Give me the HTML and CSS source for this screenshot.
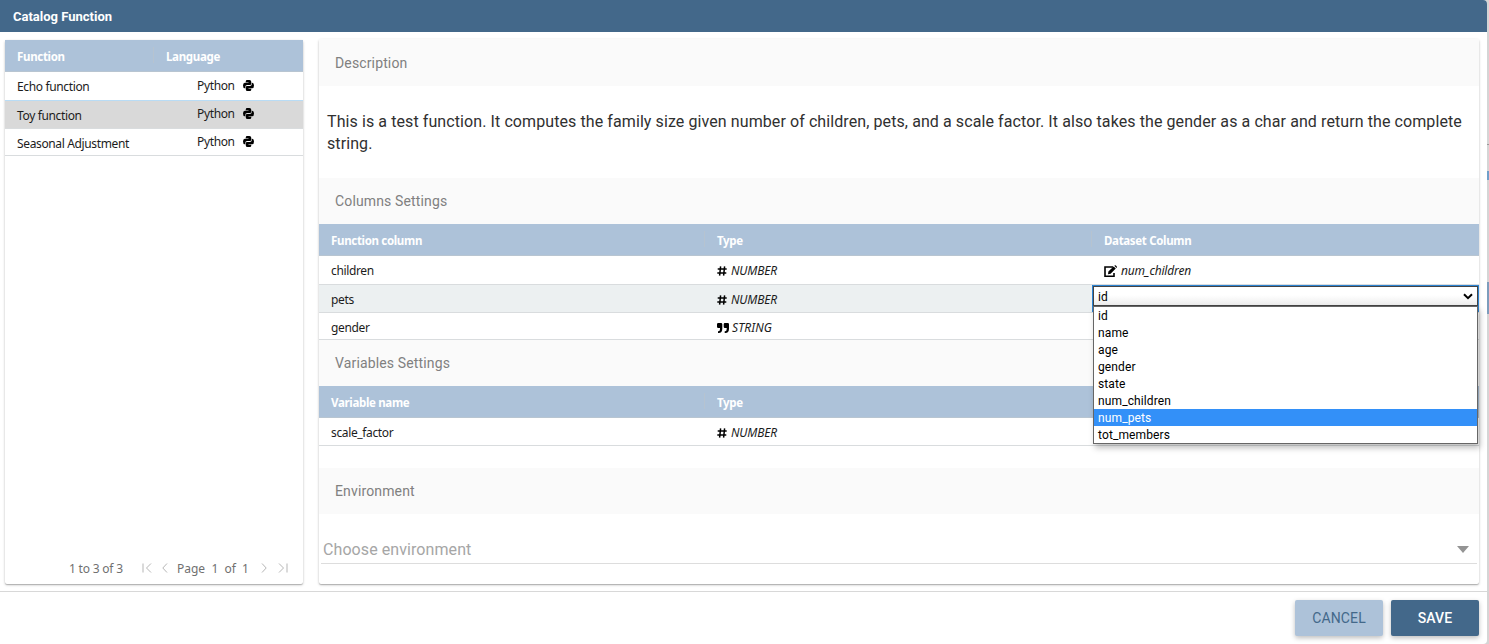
FILE: index.html
```html
<!DOCTYPE html>
<html lang="en">
<head>
<meta charset="utf-8">
<title>Catalog Function</title>
<link rel="stylesheet" href="styles.css">
</head>
<body>
<svg class="defs" aria-hidden="true">
  <symbol id="python" viewBox="0 0 24 24"><path d="M9 0h5q4 0 4 4v4q0 3-3 3H9q-4 0-4 4v3H4q-4 0-4-6t4-6h8V5H6V3q0-3 3-3z"/><path d="M15 24h-5q-4 0-4-4v-4q0-3 3-3h6q4 0 4-4V6h1q4 0 4 6t-4 6h-8v1h6v2q0 3-3 3z"/></symbol>
  <symbol id="hash" viewBox="0 0 10 10"><path d="M3.6.4 2.6 9.6M7.6.4 6.6 9.6M.7 3.1h9M.3 6.9h9" fill="none" stroke="currentColor" stroke-width="1.5"/></symbol>
  <symbol id="quote" viewBox="0 0 12 10"><path d="M1.200 0h2.800Q5.300 0 5.300 1.200v4.600Q5.300 10 1.600 10H1V8.200h.5Q3 8.200 3 6V5H1.200Q0 5 0 3.800V1.200Q0 0 1.200 0zM7.900 0h2.900Q12 0 12 1.200v4.600Q12 10 8.300 10H7.700V8.200h.5Q9.700 8.200 9.700 6V5H7.900Q6.700 5 6.700 3.800V1.200Q6.700 0 7.900 0z"/></symbol>
  <symbol id="edit" viewBox="0 0 14 12"><path d="M9 2H1v9.200h9V8" fill="none" stroke="currentColor" stroke-width="1.600"/><path d="M4 9.200l.4-2.600L9.600 1.400l2.200 2.200-5.200 5.200zM10.300.7q.8-.9 1.600-.1l.7.7q.8.8-.1 1.600z"/></symbol>
</svg>
<div class="backdrop">
<div class="dialog">
  <header class="titlebar">Catalog Function</header>
  <main class="content">
    <section class="card functions">
      <div class="grid-head"><span>Function</span><span class="sep">Language</span></div>
      <div class="grid-row"><span>Echo function</span><span class="lang">Python<svg class="py"><use href="#python"/></svg></span></div>
      <div class="grid-row selected"><span>Toy function</span><span class="lang">Python<svg class="py"><use href="#python"/></svg></span></div>
      <div class="grid-row last"><span>Seasonal Adjustment</span><span class="lang">Python<svg class="py"><use href="#python"/></svg></span></div>
      <div class="pager">
        <span class="summary">1 to 3 of 3</span>
        <svg class="first" viewBox="0 0 10 10"><path d="M1 .5v9M9 .5 4.500 5 9 9.500"/></svg>
        <svg class="prev" viewBox="0 0 6 10"><path d="M5 .5.800 5 5 9.500"/></svg>
        <span class="page">Page&nbsp; 1&nbsp; of&nbsp; 1</span>
        <svg class="next" viewBox="0 0 6 10"><path d="M1 .5 5.200 5 1 9.500"/></svg>
        <svg class="end" viewBox="0 0 10 10"><path d="M9 .5v9M1 .5 5.500 5 1 9.500"/></svg>
      </div>
    </section>
    <section class="card settings">
      <h2 class="toolbar top">Description</h2>
      <p class="description">This is a test function. It computes the family size given number of children, pets, and a scale factor. It also takes the gender as a char and return the complete string.</p>
      <h2 class="toolbar">Columns Settings</h2>
      <div class="grid-head three"><span>Function column</span><span class="sep">Type</span><span class="sep">Dataset Column</span></div>
      <div class="grid-row three"><span>children</span><span class="type"><svg class="hash"><use href="#hash"/></svg><i>NUMBER</i></span><span class="type"><svg class="edit"><use href="#edit"/></svg><i class="dataset">num_children</i></span></div>
      <div class="grid-row three hovered"><span>pets</span><span class="type"><svg class="hash"><use href="#hash"/></svg><i>NUMBER</i></span>
        <div class="editor">
          <div class="select"><span>id</span><svg class="chevron" viewBox="0 0 10 7"><path d="M1 1.200 5 5.200 9 1.200"/></svg></div>
          <ul class="options"><li>id</li><li>name</li><li>age</li><li>gender</li><li>state</li><li>num_children</li><li class="active">num_pets</li><li>tot_members</li></ul>
        </div>
      </div>
      <div class="grid-row three last"><span>gender</span><span class="type"><svg class="quote"><use href="#quote"/></svg><i class="string">STRING</i></span><span></span></div>
      <h2 class="toolbar">Variables Settings</h2>
      <div class="grid-head three"><span>Variable name</span><span class="sep">Type</span><span></span></div>
      <div class="grid-row three only"><span>scale_factor</span><span class="type"><svg class="hash"><use href="#hash"/></svg><i>NUMBER</i></span><span></span></div>
      <h2 class="toolbar env">Environment</h2>
      <div class="env-select"><span>Choose environment</span><b class="caret"></b></div>
    </section>
  </main>
  <footer class="actions"><button class="btn cancel">CANCEL</button><button class="btn save">SAVE</button></footer>
</div>
<div class="behind"></div>
</div>
</body>
</html>
```
FILE: styles.css
```css
* { box-sizing: border-box; }
body { margin: 0; font-family: Roboto, sans-serif; overflow: hidden; }
.defs { position: absolute; width: 0; height: 0; }
.backdrop { display: flex; height: 644px; background: #d5d5d5; }
.behind { width: 2px; background: linear-gradient(#d5d5d5 144px, #999 144px 145px, #d5d5d5 145px 171px, #6f9fc9 171px 180px, #d5d5d5 180px 282px, #7d9dbc 282px 314px, #d5d5d5 314px); }
.dialog { display: flex; flex-direction: column; width: 1487px; height: 644px; background: #fff; border-radius: 0 4px 4px 0; overflow: hidden; }
.titlebar { height: 32px; padding-left: 13px; background: #43688a; color: #fff; font-size: 13px; font-weight: 700; line-height: 33px; letter-spacing: 0; }
.content { display: flex; gap: 16px; height: 560px; padding: 8px 8px 8px 5px; border-bottom: 1px solid #d8d8d8; }
.card { display: flex; flex-direction: column; background: #fff; border-radius: 2px; box-shadow: 0 1px 3px rgba(0,0,0,.2), 0 1px 1px rgba(0,0,0,.2); }
.functions { width: 298px; height: 544px; }
.settings { width: 1160px; height: 545px; margin-top: -1px; }

.grid-head, .grid-row { display: grid; grid-template-columns: 149px 149px; flex: none; font-family: "Noto Sans", sans-serif; font-size: 12px; }
.grid-head { height: 32px; align-items: center; background: #adc2d9; border-bottom: 1px solid #b8c5d1; color: #fff; font-weight: 700; font-size: 11.500px; letter-spacing: -.33px; }
.grid-head > span, .grid-row > span { padding-left: 12px; }
.grid-head > span { line-height: 16px; padding-top: 2px; }
.sep { position: relative; }
.sep::before { content: ""; position: absolute; left: -1px; top: 0; height: 16px; border-left: 1px solid #b6c3d0; }
.three { grid-template-columns: 386px 387px 387px; }
.grid-row { height: 28px; line-height: 28px; border-bottom: 1px solid #d9dcde; color: #1c1c1c; letter-spacing: -.36px; }
.grid-row > span { padding-top: 1px; }
.functions .grid-row { height: 29px; border-color: #b9dcf5; }
.functions .selected { height: 28px; background: #d9d9d9; border-color: #d9dcde; }
.functions .last { height: 27px; border-color: #d9dcde; }
.grid-row .lang { display: flex; padding: 0 0 0 43px; height: 27px; line-height: 27px; align-items: center; }
.functions .selected .lang, .functions .last .lang { line-height: 25px; height: 25px; }
.py { width: 11px; height: 11px; margin-left: 8px; fill: #000; }
.three.grid-row { height: 29px; }
.three.grid-row.hovered { height: 28px; background: #ecf0f1; }
.three.grid-row.last { height: 27px; }
.three.grid-row.only { height: 28px; }
.type { display: flex; align-items: center; height: 28px; }
.type svg { color: #000; fill: #000; }
.type i { font-weight: 400; letter-spacing: -.15px; }
.type i.string { letter-spacing: .1px; }
.hash { width: 10px; height: 10px; margin-right: 4px; }
.quote { width: 12px; height: 10px; margin-right: 3px; }
.edit { width: 14px; height: 12px; margin-right: 3px; }
.type i.dataset { letter-spacing: -.18px; }

.pager { display: flex; align-items: center; height: 32px; margin-top: auto; padding-left: 64px; color: #707070; font-family: "Noto Sans", sans-serif; font-size: 12px; }
.pager svg { height: 10px; fill: none; stroke: #b5b5b5; stroke-width: 1; }
.summary { width: 73px; letter-spacing: -.2px; }
.pager .first { width: 10px; }
.pager .prev { width: 6px; margin-left: 10px; }
.page { width: 74px; margin-left: 9px; white-space: nowrap; }
.pager .next { width: 6px; margin-left: 10px; }
.pager .end { width: 10px; margin-left: 11px; }

.toolbar { flex: none; height: 46px; margin: 0; padding-left: 16px; background: #fafafa; color: #808080; font-size: 14px; font-weight: 400; line-height: 46px; letter-spacing: .14px; }
.toolbar.top { height: 47px; line-height: 48px; }
.toolbar.env { margin-top: 22px; }
.description { height: 92px; margin: 0; padding: 25px 8px 0; color: #303030; font-size: 16px; line-height: 22px; letter-spacing: .09px; }
.env-select { display: flex; align-items: center; justify-content: space-between; height: 29px; margin: 21px 2px 0; padding: 0 8px 0 2px; border-bottom: 1px solid #ddd; color: #a6a6a6; font-size: 16px; letter-spacing: .08px; }
.caret { margin-top: 1px; border: 6px solid transparent; border-top: 7px solid #949494; border-bottom: 0; }

/* The open list covers the rows beneath the cell being edited. */
.editor { position: relative; width: 387px; height: 27px; border: 1px solid #2c83d2; font-family: Roboto, sans-serif; font-size: 12px; color: #000; letter-spacing: .12px; }
.select { display: flex; align-items: center; justify-content: space-between; height: 20px; border: 1px solid #444; padding: 1px 4px 0; background: linear-gradient(#fff 45%, #ededed); }
.chevron { width: 10px; height: 7px; fill: none; stroke: #000; stroke-width: 2; }
.options { position: absolute; z-index: 2; left: 0; top: 20px; width: 385px; height: 138px; margin: 0; padding: 0; list-style: none; background: #fff; border: 1px solid #666; box-shadow: 2px 4px 6px rgba(0,0,0,.25); }
.options li { height: 17px; padding-left: 4px; line-height: 19px; }
.options .active { background: #3390f8; color: #fff; }

.actions { display: flex; justify-content: flex-end; gap: 8px; padding: 8px 8px 0 0; }
.btn { width: 88px; height: 36px; padding: 0; border: 0; border-radius: 2px; font: 500 14px Roboto, sans-serif; letter-spacing: .14px; box-shadow: 0 2px 5px rgba(0,0,0,.26); }
.cancel { background: #adc2d9; color: #43688a; font-weight: 400; }
.save { background: #43688a; color: #fff; }
```
